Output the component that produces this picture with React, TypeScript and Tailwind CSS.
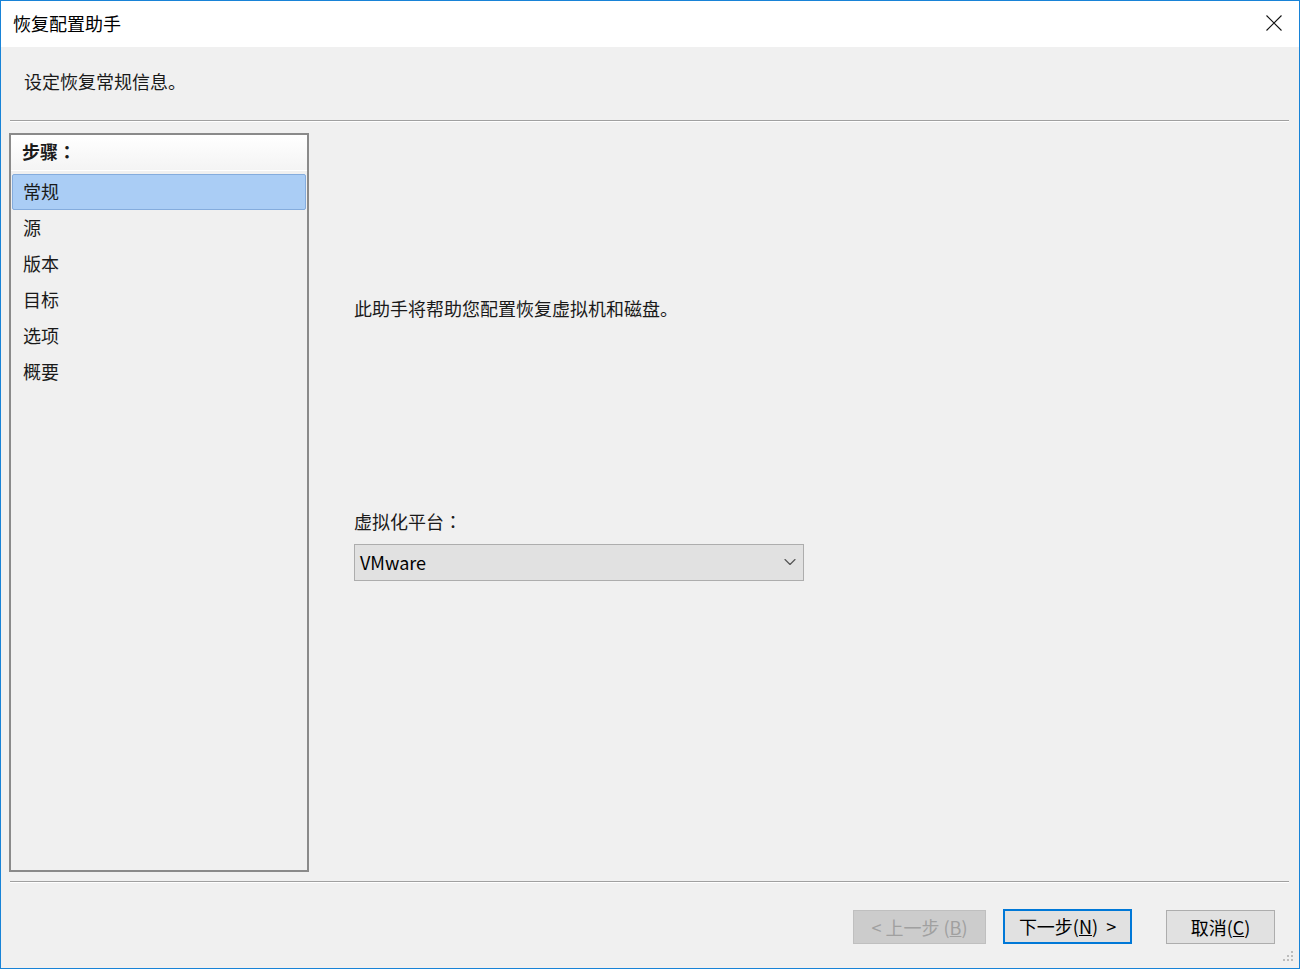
import { ChevronDown } from "lucide-react";

const steps = ["常规", "源", "版本", "目标", "选项", "概要"];

function CloseIcon() {
    return <svg width="18" height="18" viewBox="0 0 18 18" className="block">
        <path d="M1.5 1.5 L16.5 16.5 M16.5 1.5 L1.5 16.5" stroke="#111" strokeWidth="1.1" fill="none"/>
    </svg>
}

function Grip() {
    return <svg width="14" height="14" viewBox="0 0 14 14" className="absolute right-[3px] bottom-[4px]">
        {[[9, 1], [5, 5], [9, 5], [1, 9], [5, 9], [9, 9]].map(([x, y], i) => (
            <rect key={i} x={x} y={y} width="2" height="2" fill="#bcbcbc"/>
        ))}
    </svg>
}

function Colon() {
    return <span style={{fontFamily: '"Noto Sans CJK TC", sans-serif'}}>：</span>
}

function Separator() {
    return <div className="ml-[9px] mr-[10px] border-t border-t-[#a0a0a0] border-b border-b-white"/>
}

export default function App() {
    return <div
        className="relative w-[1300px] h-[969px] border border-[#1883d7] bg-[#f0f0f0] flex flex-col text-[18px] text-[#1a1a1a] overflow-hidden"
        style={{fontFamily: '"Noto Sans CJK SC", "Noto Sans", sans-serif'}}
    >
        <div className="h-[46px] bg-white flex flex-row items-center justify-between pl-[12px] pr-[16px] pb-[2px] shrink-0">
            <span className="leading-6 text-black">恢复配置助手</span>
            <CloseIcon/>
        </div>

        <div className="h-[73px] pl-[23px] pt-[22px] shrink-0">
            <p className="leading-6">设定恢复常规信息。</p>
        </div>

        <Separator/>

        <div className="mt-[11px] h-[739px] flex flex-row shrink-0">
            <div className="ml-[8px] w-[300px] border-2 border-[#8a8a8a] bg-[#f0f0f0] flex flex-col">
                <div className="h-[36px] bg-gradient-to-b from-white to-[#f4f4f4] border-b border-b-white flex items-center pl-[11px] pb-[3px]">
                    <span className="font-bold leading-6">步骤<Colon/></span>
                </div>
                <div className="flex flex-col pt-[3px] px-[1px]">
                    {steps.map((s, i) => (
                        <div
                            key={s}
                            className={i === 0
                                ? "h-[36px] flex items-center pl-[10px] pb-[2px] bg-[#aacdf5] border border-[#84acdd] rounded-[2px]"
                                : "h-[36px] flex items-center pl-[11px] pb-[2px]"}
                        >
                            <span className="leading-6">{s}</span>
                        </div>
                    ))}
                </div>
            </div>

            <div className="flex-1 flex flex-col pl-[45px]">
                <p className="mt-[163px] leading-6">此助手将帮助您配置恢复虚拟机和磁盘。</p>
                <p className="mt-[189px] leading-6">虚拟化平台<Colon/></p>
                <div className="mt-[11px] w-[450px] h-[37px] bg-[#e1e1e1] border border-[#adadad] flex flex-row items-center justify-between pl-[5px] pr-[3px] pb-[1px]">
                    <span className="leading-6 text-black">VMware</span>
                    <ChevronDown size={20} strokeWidth={1.4} color="#555"/>
                </div>
            </div>
        </div>

        <div className="mt-[9px]">
            <Separator/>
        </div>

        <div className="flex-1 flex flex-row justify-end items-start pt-[27px] pr-[24px]">
            <div className="w-[133px] h-[34px] bg-[#cccccc] border border-[#bfbfbf] flex items-center justify-center pb-[1px] text-[#a0a0a0]">
                <span className="leading-6">&lt; 上一步 (<span className="underline">B</span>)</span>
            </div>
            <div className="ml-[17px] w-[129px] h-[35px] -mt-[1px] bg-[#e1e1e1] border-2 border-[#0078d7] flex items-center justify-center pb-[1px] text-black">
                <span className="leading-6">下一步(<span className="underline">N</span>)&nbsp;&nbsp;&gt;</span>
            </div>
            <div className="ml-[34px] w-[109px] h-[34px] bg-[#e1e1e1] border border-[#adadad] flex items-center justify-center pb-[1px] text-black">
                <span className="leading-6">取消(<span className="underline">C</span>)</span>
            </div>
        </div>

        <Grip/>
    </div>
}
